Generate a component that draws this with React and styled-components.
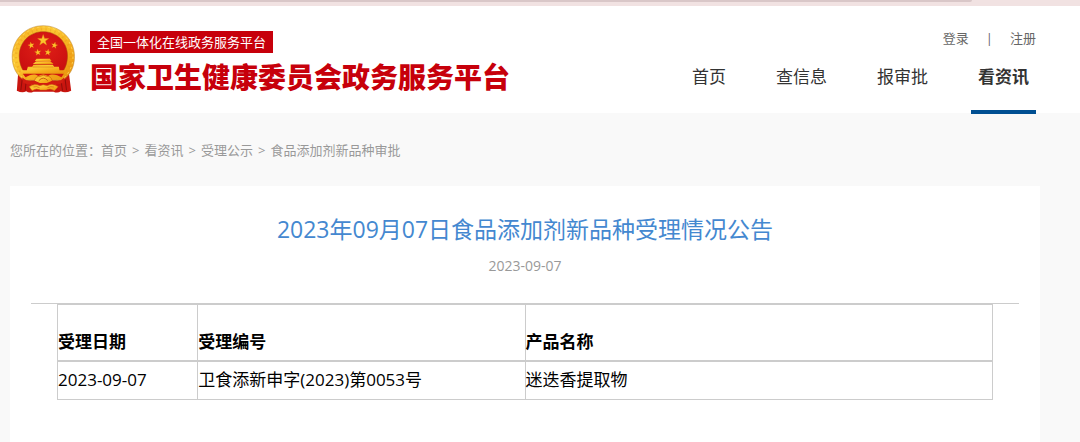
import React from 'react'
import styled, { createGlobalStyle } from 'styled-components'

const navItems = [
  { name: '首页' },
  { name: '查信息' },
  { name: '报审批' },
  { name: '看资讯', active: true },
]

const crumbs = ['首页', '看资讯', '受理公示', '食品添加剂新品种审批']

const columns = [
  { title: '受理日期', width: '15%' },
  { title: '受理编号', width: '35%' },
  { title: '产品名称', width: '50%' },
]

const rows = [['2023-09-07', '卫食添新申字(2023)第0053号', '迷迭香提取物']]

const starPath = 'M0 -10 L2.4 -3.2 L9.5 -3.1 L3.8 1.2 L5.9 8.1 L0 4 L-5.9 8.1 L-3.8 1.2 L-9.5 -3.1 L-2.4 -3.2 Z'

function Emblem() {
  return (
    <EmblemSvg viewBox="18 14 200 210" role="img" aria-label="国徽">
      <defs>
        <linearGradient id="gold" x1="0" y1="0" x2="1" y2="1">
          <stop offset="0" stopColor="#f3a61c" />
          <stop offset="0.35" stopColor="#fcc934" />
          <stop offset="0.65" stopColor="#f6ac1c" />
          <stop offset="1" stopColor="#e8920f" />
        </linearGradient>
        <radialGradient id="red" cx="0.5" cy="0.4" r="0.6">
          <stop offset="0" stopColor="#e02018" />
          <stop offset="1" stopColor="#cb1010" />
        </radialGradient>
      </defs>
      {/* drapes */}
      <path d="M42 160 L38 214 Q54 222 66 216 Q76 223 88 217 L148 217 Q160 223 170 216 Q184 222 201 214 L194 160 Z" fill="#c9150f" />
      <path d="M54 180 L50 213 M66 186 L63 214 M171 186 L175 214 M183 180 L187 213" stroke="#8f0d0a" strokeWidth="3" fill="none" />
      {/* wheat ring */}
      <path d="M117 19 C170 19 211 60 211 112 C211 145 197 169 174 183 L61 183 C38 169 24 145 24 112 C24 60 65 19 117 19 Z" fill="url(#gold)" stroke="#b98a3a" strokeWidth="1.5" />
      <ellipse cx="117.5" cy="112" rx="82" ry="82" fill="none" stroke="#dc8a12" strokeWidth="7" strokeDasharray="4 10" opacity="0.3" />
      <ellipse cx="117.5" cy="112" rx="89" ry="89" fill="none" stroke="#ffe16a" strokeWidth="3" strokeDasharray="7 9" opacity="0.7" />
      <path d="M117 37 C159 37 190 69 190 110 C190 129 184 148 173 160 L62 160 C51 148 45 129 45 110 C45 69 76 37 117 37 Z" fill="url(#red)" stroke="#a9480e" strokeWidth="1.5" />
      {/* stars */}
      <g fill="#fbc42c" stroke="#e28a14" strokeWidth="0.6">
        <path d={starPath} transform="translate(117 63) scale(1.75)" />
        <path d={starPath} transform="translate(81 78) rotate(-12)" />
        <path d={starPath} transform="translate(151 78) rotate(12)" />
        <path d={starPath} transform="translate(101 99) rotate(-8)" />
        <path d={starPath} transform="translate(131 99) rotate(8)" />
      </g>
      {/* gate */}
      <g fill="url(#gold)">
        <path d="M97 118 H137 L142 125 H92 Z" />
        <path d="M96 126 H138 L148 134 H86 Z" />
        <path d="M88 136 H146 L150 142 H164 L166 153 H186 L180 162 H54 L48 153 H68 L71 142 H84 Z" />
      </g>
      <path d="M96 135 H138 M86 143 H148" stroke="#ce6c10" strokeWidth="1.5" />
      <path d="M56 163 H179 L172 174 C158 166 143 162 132 170 Q117 161 102 170 C91 162 78 166 64 174 Z" fill="#cf1710" />
      {/* gear and ribbon */}
      <path d="M91 184 Q95 169 108 171 Q117 164 127 171 Q140 169 144 184 L136 193 H99 Z" fill="url(#gold)" stroke="#c9600f" strokeWidth="2" />
      <path d="M104 184 Q117 169 131 184" fill="none" stroke="#c9600f" strokeWidth="3" />
      <path d="M54 174 Q72 191 92 184 L107 191 H128 L144 184 Q164 191 181 174 L177 190 Q158 199 145 193 Q132 202 117 199 Q102 202 90 193 Q75 199 57 190 Z" fill="#d21c11" />
      <path d="M75 202 Q91 191 107 199 L117 196 L129 199 Q145 191 162 202 L151 214 Q137 205 126 212 H109 Q96 205 84 214 Z" fill="url(#gold)" stroke="#cd6510" strokeWidth="1.5" />
      <path d="M88 203 Q97 200 106 205 M130 205 Q140 200 149 203" fill="none" stroke="#c9600f" strokeWidth="2" />
    </EmblemSvg>
  )
}

function App() {
  return (
    <>
      <GlobalStyle />
      <TopStrip><StripShade /></TopStrip>
      <Header>
        <Brand href="#">
          <Emblem />
          <BrandText>
            <Tag>全国一体化在线政务服务平台</Tag>
            <SiteName>国家卫生健康委员会政务服务平台</SiteName>
          </BrandText>
        </Brand>
        <HeaderRight>
          <Account>
            <a href="#">登录</a>
            <span>|</span>
            <a href="#">注册</a>
          </Account>
          <Nav>
            {navItems.map((item) => (
              <NavLink href="#" key={item.name} $active={item.active}>{item.name}</NavLink>
            ))}
          </Nav>
        </HeaderRight>
      </Header>
      <Main>
        <Breadcrumb>
          <span>您所在的位置：</span>
          {crumbs.map((crumb, i) => (
            <React.Fragment key={crumb}>
              {i > 0 && <Arrow>&gt;</Arrow>}
              <a href="#">{crumb}</a>
            </React.Fragment>
          ))}
        </Breadcrumb>
        <Card>
          <Title>2023年09月07日食品添加剂新品种受理情况公告</Title>
          <PublishDate>2023-09-07</PublishDate>
          <TableArea>
            <Table>
              <thead>
                <tr>
                  {columns.map((col) => (
                    <HeadCell key={col.title} $width={col.width}>{col.title}</HeadCell>
                  ))}
                </tr>
              </thead>
              <tbody>
                {rows.map((row) => (
                  <tr key={row[1]}>
                    {row.map((cell) => <Cell key={cell}>{cell}</Cell>)}
                  </tr>
                ))}
              </tbody>
            </Table>
          </TableArea>
        </Card>
      </Main>
    </>
  )
}

export default App

const GlobalStyle = createGlobalStyle`
* {
    box-sizing: border-box;
}
html, body, #root {
    height: 100%;
}
body {
    margin: 0;
    background: #f9f9f9;
    font-family: "Open Sans", "Noto Sans CJK SC", sans-serif;
}
#root {
    display: flex;
    flex-direction: column;
}
a {
    color: inherit;
    text-decoration: none;
}
`
const TopStrip = styled.div`
flex: none;
height: 6px;
background: #f1e2e2;
`
const StripShade = styled.div`
width: 90%;
height: 2px;
background: #d9c7c8;
border-bottom-right-radius: 4px;
`
const Header = styled.header`
flex: none;
display: flex;
justify-content: space-between;
padding: 0 44px 0 10px;
height: 107px;
background: #fff;
`
const Brand = styled.a`
display: flex;
align-items: flex-start;
gap: 13px;
padding-top: 18px;
`
const EmblemSvg = styled.svg`
width: 67px;
height: 70px;
`
const BrandText = styled.div`
display: flex;
flex-direction: column;
align-items: flex-start;
gap: 6px;
padding-top: 7px;
`
const Tag = styled.span`
padding: 0 7px;
background: #c7000b;
color: #fff;
font-size: 13px;
line-height: 22px;
`
const SiteName = styled.strong`
color: #c7000b;
font-size: 28px;
font-weight: 900;
line-height: 36px;
white-space: nowrap;
`
const HeaderRight = styled.div`
display: flex;
flex-direction: column;
align-items: flex-end;
justify-content: space-between;
padding-top: 22px;
`
const Account = styled.div`
display: flex;
gap: 17px;
color: #666;
font-size: 13px;
line-height: 20px;
`
const Nav = styled.nav`
display: flex;
gap: 36px;
margin-bottom: -1px;
`
const NavLink = styled.a`
padding: 0 7px;
height: 52px;
border-bottom: 4px solid ${({ $active }) => ($active ? '#004f92' : 'transparent')};
color: #333;
font-size: 17px;
font-weight: ${({ $active }) => ($active ? 700 : 400)};
line-height: 30px;
`
const Main = styled.main`
flex: 1;
display: flex;
flex-direction: column;
padding: 0 40px 0 10px;
`
const Breadcrumb = styled.nav`
display: flex;
align-items: center;
height: 73px;
color: #999;
font-size: 13px;
`
const Arrow = styled.span`
padding: 0 5px;
`
const Card = styled.article`
flex: 1;
padding: 27px 21px 0;
background: #fff;
text-align: center;
`
const Title = styled.h1`
margin: 0;
color: #4488d0;
font-size: 23px;
font-weight: 400;
line-height: 32px;
`
const PublishDate = styled.p`
margin: 11px 0 27px;
color: #999;
font-size: 14px;
line-height: 20px;
`
const TableArea = styled.div`
padding: 0 26px;
border-top: 1px solid #ccc;
`
const Table = styled.table`
width: 100%;
table-layout: fixed;
border-collapse: collapse;
color: #000;
font-size: 17px;
line-height: 24px;
text-align: left;
`
const HeadCell = styled.th`
width: ${({ $width }) => $width};
height: 56px;
padding: 0 0 6px;
border: 1px solid #ccc;
border-bottom-width: 2px;
vertical-align: bottom;
`
const Cell = styled.td`
height: 39px;
padding: 0;
border: 1px solid #ccc;
`
